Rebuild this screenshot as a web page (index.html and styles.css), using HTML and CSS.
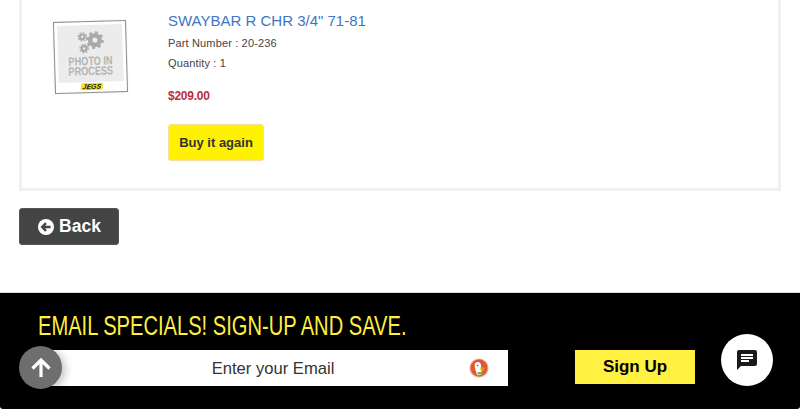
FILE: index.html
```html
<!DOCTYPE html>
<html>
<head>
  <title>Order Details</title>
  <link rel="stylesheet" href="styles.css">
</head>
<body>

  <div class="item-card">
    <div class="thumb-col">
      <div class="photo">
        <div class="photo-inner">
          <svg class="gears" width="40" height="34" viewBox="0 0 40 34">
            <g fill="none" stroke="#a9a9a9">
              <circle cx="26" cy="14" r="6.5" stroke-width="6"/>
              <circle cx="26" cy="14" r="10.5" stroke-width="3" stroke-dasharray="4 4.25"/>
              <circle cx="9" cy="9" r="3.2" stroke-width="3"/>
              <circle cx="9" cy="9" r="5.6" stroke-width="2" stroke-dasharray="2.2 2.2"/>
              <circle cx="11" cy="25" r="3.2" stroke-width="3"/>
              <circle cx="11" cy="25" r="5.6" stroke-width="2" stroke-dasharray="2.2 2.2"/>
            </g>
          </svg>
          <div class="photo-text">PHOTO IN<br>PROCESS</div>
        </div>
        <div class="jegs">JEGS</div>
      </div>
    </div>
    <div class="info-col">
      <a class="item-name" href="#">SWAYBAR R CHR 3/4" 71-81</a>
      <div class="item-line">Part Number : 20-236</div>
      <div class="item-line">Quantity : 1</div>
      <div class="item-price">$209.00</div>
      <button class="buy-btn">Buy it again</button>
    </div>
  </div>

  <button class="back-btn">
    <svg width="16" height="16" viewBox="0 0 16 16">
      <circle cx="8" cy="8" r="8" fill="#fff"/>
      <path d="M12.5 8H5M8 4.2 4.2 8 8 11.8" fill="none" stroke="#444" stroke-width="2.4"/>
    </svg>
    Back
  </button>

  <div class="footer">
    <div class="footer-title">EMAIL SPECIALS! SIGN-UP AND SAVE.</div>
    <div class="signup-row">
      <div class="email-box">
        Enter your Email
        <svg class="ddg" width="20" height="20" viewBox="0 0 20 20">
          <circle cx="10" cy="10" r="9.6" fill="#f3a995"/>
          <circle cx="10" cy="10" r="8.4" fill="#de5833"/>
          <path d="M6 5.5C7 3.6 10 3.4 11.2 5c1 1.4 1 4 1.2 6.5.1 2 .2 3.5.4 5-2 .8-3.6.8-5 .2C7.400 13.500 5 9 6 5.500z" fill="#fff"/>
          <path d="M11 9.500h4.300v1.300H11zM11.500 11.500h3.500v1.200h-3.500z" fill="#f5a623"/>
          <path d="M8.500 14h5v2.500h-5z" fill="#65bc46"/>
          <circle cx="8.500" cy="7.500" r=".8" fill="#2d4f8e"/>
        </svg>
      </div>
      <button class="signup-btn">Sign Up</button>
    </div>
    <button class="top-btn">
      <svg width="22" height="22" viewBox="0 0 22 22">
        <path d="M11 20V3M2.500 11.500 11 3l8.500 8.500" fill="none" stroke="#fff" stroke-width="3.200"/>
      </svg>
    </button>
    <button class="chat-btn">
      <svg width="24" height="24" viewBox="0 0 24 24">
        <path d="M20 2H4c-1.100 0-1.990.9-1.990 2L2 22l4-4h14c1.100 0 2-.9 2-2V4c0-1.100-.9-2-2-2zM6 9h12v2H6V9zm8 5H6v-2h8v2zm4-6H6V6h12v2z" fill="#1a1a1a"/>
      </svg>
    </button>
  </div>

</body>
</html>
```

FILE: styles.css
```css
html, body {
  margin: 0;
  padding: 0;
  height: 410px;
  overflow: hidden;
}
body {
  background: #fff;
  color: #333;
  font-family: "Liberation Sans", Arial, sans-serif;
}
button {
  font-family: inherit;
  cursor: pointer;
}

.item-card {
  display: flex;
  height: 188px;
  margin: 0 19px;
  border: 3px solid #f0f0f0;
  border-top: none;
}
.thumb-col {
  width: 146px;
  padding: 21px 0 0 32px;
  box-sizing: border-box;
}
.photo {
  width: 73px;
  height: 72px;
  padding: 3px 3px 0;
  box-sizing: border-box;
  border: 1px solid #8d8d8d;
  background: #fff;
  transform: rotate(-1.7deg);
  box-shadow: 0 0 1px #bbb;
}
.photo-inner {
  display: flex;
  flex-direction: column;
  align-items: center;
  height: 57px;
  padding-top: 5px;
  box-sizing: border-box;
  background: #ececec;
}
.gears {
  width: 30px;
  height: 25px;
}
.photo-text {
  margin-top: 2px;
  color: #b3b3b3;
  font-size: 12px;
  font-weight: bold;
  line-height: 9.500px;
  text-align: center;
  white-space: nowrap;
  transform: scaleX(.76);
}
.jegs {
  width: 22px;
  height: 7px;
  margin: 1px auto 0;
  background: #f5e625;
  color: #111;
  font-size: 7px;
  font-style: italic;
  font-weight: bold;
  line-height: 7px;
  text-align: center;
  transform: skewX(-8deg);
}

.info-col {
  display: flex;
  flex-direction: column;
  align-items: flex-start;
  padding-top: 12px;
}
.item-name {
  color: #3d76c5;
  font-size: 15px;
  line-height: 18px;
  text-decoration: none;
}
.item-line {
  margin-top: 5px;
  color: #444;
  font-size: 11px;
  line-height: 17px;
  letter-spacing: .15px;
}
.item-line + .item-line {
  margin-top: 3px;
}
.item-price {
  margin-top: 16px;
  color: #b93044;
  font-size: 12px;
  font-weight: bold;
  line-height: 16px;
  letter-spacing: -.25px;
}
.buy-btn {
  width: 96px;
  height: 37px;
  margin-top: 20px;
  padding: 0;
  background: #fff200;
  border: 1px solid #f6dda0;
  border-radius: 3px;
  color: #333;
  font-size: 13px;
  font-weight: bold;
}

.back-btn {
  display: flex;
  align-items: center;
  justify-content: center;
  gap: 5px;
  width: 100px;
  height: 37px;
  margin: 17px 0 0 19px;
  padding: 0 0 0 1px;
  background: #444;
  border: 1px solid #555;
  border-radius: 3px;
  color: #fff;
  font-size: 17.500px;
  font-weight: bold;
}

.footer {
  position: relative;
  height: 117px;
  margin-top: 47px;
  box-sizing: border-box;
  background: #000;
  border-top: 1px solid #ddd;
  border-radius: 0 0 3px 3px;
}
.footer-title {
  padding: 18px 0 0 38px;
  color: #fff042;
  font-size: 27px;
  line-height: 31px;
  white-space: nowrap;
  transform: scaleX(.745);
  transform-origin: 38px 0;
}
.signup-row {
  display: flex;
  align-items: flex-start;
  margin: 8px 0 0 38px;
}
.email-box {
  position: relative;
  width: 470px;
  height: 36px;
  background: #fff;
  color: #333;
  font-size: 16.600px;
  line-height: 37px;
  text-align: center;
}
.ddg {
  position: absolute;
  right: 19px;
  top: 8px;
}
.signup-btn {
  width: 120px;
  height: 34px;
  margin-left: 67px;
  padding: 0;
  background: #fff042;
  border: none;
  color: #000;
  font-size: 17px;
  font-weight: bold;
}
.top-btn {
  position: absolute;
  left: 19px;
  top: 53px;
  display: flex;
  align-items: center;
  justify-content: center;
  width: 43px;
  height: 43px;
  padding: 0;
  background: #6e6e6e;
  border: none;
  border-radius: 50%;
  box-shadow: 3px 2px 8px rgba(0, 0, 0, .25);
}
.chat-btn {
  position: absolute;
  left: 721px;
  top: 41px;
  display: flex;
  align-items: center;
  justify-content: center;
  width: 52px;
  height: 52px;
  padding: 0;
  background: #fff;
  border: none;
  border-radius: 50%;
}
```
